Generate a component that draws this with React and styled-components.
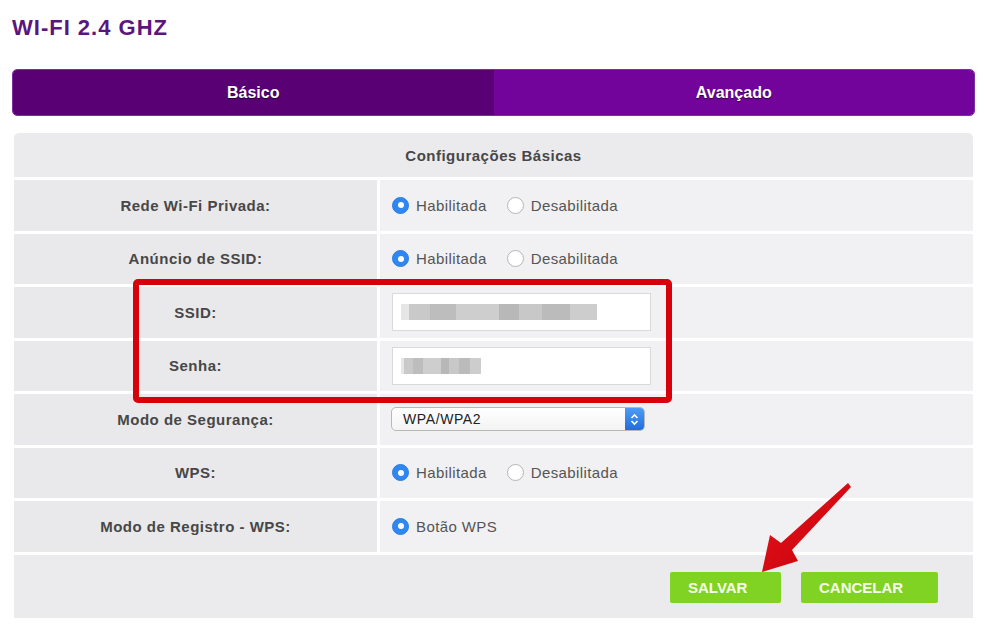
import React from 'react';
import styled, { createGlobalStyle } from 'styled-components';

const GlobalStyle = createGlobalStyle`
  html, body {
    margin: 0;
    padding: 0;
    background: #fff;
    font-family: "Liberation Sans", Arial, sans-serif;
  }
`;

const Page = styled.div`
  position: relative;
  width: 984px;
  height: 631px;
  overflow: hidden;
  padding: 14px 9px 0 12px;
  box-sizing: border-box;
`;

const Title = styled.h1`
  margin: 0 0 27px 0;
  font-size: 22px;
  line-height: 28px;
  letter-spacing: 1px;
  font-weight: bold;
  color: #5b157f;
`;

const Tabs = styled.div`
  display: flex;
  height: 47px;
  border-radius: 5px;
  overflow: hidden;
  border: 1px solid #7d2fa0;
  box-sizing: border-box;
  margin-bottom: 17px;
`;

const Tab = styled.div`
  flex: 1;
  display: flex;
  align-items: center;
  justify-content: center;
  background: ${p => (p.$active ? '#5a0075' : '#72039b')};
  color: #fff;
  font-weight: bold;
  font-size: 16px;
  text-shadow: 0 1px 1px rgba(0, 0, 0, 0.6);
`;

const Panel = styled.div`
  margin: 0 2px;
  display: grid;
  grid-template-columns: 363px 1fr;
  grid-template-rows: 44px repeat(7, 50.5px) 63px;
  gap: 3px;
`;

const Header = styled.div`
  grid-column: 1 / -1;
  background: #ebebed;
  border-radius: 5px 5px 0 0;
  display: flex;
  align-items: center;
  justify-content: center;
  font-weight: bold;
  font-size: 15px;
  letter-spacing: 0.5px;
  color: #474747;
`;

const Label = styled.div`
  background: #e9e9eb;
  display: flex;
  align-items: center;
  justify-content: center;
  font-weight: bold;
  font-size: 15px;
  letter-spacing: 0.5px;
  color: #474747;
`;

const Value = styled.div`
  background: #f1f1f3;
  display: flex;
  align-items: center;
  padding-left: 12px;
  font-size: 15px;
  letter-spacing: 0.4px;
  color: #555;
`;

const RadioItem = styled.label`
  display: flex;
  align-items: center;
  margin-right: 20px;
`;

const RadioDot = styled.span`
  width: 17px;
  height: 17px;
  border-radius: 50%;
  box-sizing: border-box;
  margin-right: 7px;
  display: flex;
  align-items: center;
  justify-content: center;
  background: ${p => (p.$on ? '#2f87f2' : '#fff')};
  border: 1px solid ${p => (p.$on ? '#2a7de0' : '#b5b5b5')};
  &::after {
    content: '';
    display: ${p => (p.$on ? 'block' : 'none')};
    width: 6px;
    height: 6px;
    border-radius: 50%;
    background: #fff;
  }
`;

const TextInput = styled.div`
  width: 259px;
  height: 38px;
  box-sizing: border-box;
  background: #fff;
  border: 1px solid #d9d9d9;
  display: flex;
  align-items: center;
  padding-left: 8px;
`;

const Blur = styled.span`
  display: block;
  height: 16px;
  width: ${p => p.$w}px;
  background: linear-gradient(90deg, #e6e6e6 0 4%, #c9c9c9 4% 15%, #bdbdbd 15% 28%, #cecece 28% 50%, #b8b8b8 50% 60%, #c8c8c8 60% 72%, #bbbbbb 72% 86%, #cdcdcd 86%);
  filter: blur(0.6px);
`;

const Select = styled.div`
  width: 254px;
  height: 24px;
  box-sizing: border-box;
  border: 1px solid #b8b8b8;
  border-radius: 5px;
  background: linear-gradient(#fff, #f4f4f4);
  display: flex;
  align-items: center;
  justify-content: space-between;
  font-size: 14px;
  letter-spacing: 0.6px;
  color: #222;
  padding-left: 11px;
  overflow: hidden;
  margin-left: -1px;
`;

const Stepper = styled.span`
  width: 19px;
  height: 100%;
  background: linear-gradient(#4e9cf5, #1d6fe0);
  display: flex;
  align-items: center;
  justify-content: center;
`;

const Footer = styled.div`
  grid-column: 1 / -1;
  background: #ebebed;
  display: flex;
  align-items: center;
  justify-content: flex-end;
  gap: 20px;
  padding: 0 35px 0 0;
`;

const Button = styled.button`
  width: ${p => p.$w}px;
  height: 31px;
  border: none;
  border-radius: 2px;
  background: #80d323;
  color: #f6ffec;
  font-family: "Liberation Sans", Arial, sans-serif;
  font-size: 15px;
  font-weight: bold;
  text-align: left;
  padding-left: 18px;
  margin-top: 2px;
`;

const Highlight = styled.div`
  position: absolute;
  left: 133px;
  top: 279px;
  width: 539px;
  height: 124px;
  box-sizing: border-box;
  border: 6px solid #d8000b;
  border-radius: 5px;
  pointer-events: none;
`;

const Arrow = styled.svg`
  position: absolute;
  left: 0;
  top: 0;
  pointer-events: none;
`;

const Radio = ({ on, children }) => (
  <RadioItem>
    <RadioDot $on={on} />
    {children}
  </RadioItem>
);

const Toggle = () => (
  <>
    <Radio on>Habilitada</Radio>
    <Radio>Desabilitada</Radio>
  </>
);

export default function App() {
  return (
    <>
      <GlobalStyle />
      <Page>
        <Title>WI-FI 2.4 GHZ</Title>
        <Tabs>
          <Tab $active>Básico</Tab>
          <Tab>Avançado</Tab>
        </Tabs>
        <Panel>
          <Header>Configurações Básicas</Header>
          <Label>Rede Wi-Fi Privada:</Label>
          <Value><Toggle /></Value>
          <Label>Anúncio de SSID:</Label>
          <Value><Toggle /></Value>
          <Label>SSID:</Label>
          <Value><TextInput><Blur $w={196} /></TextInput></Value>
          <Label>Senha:</Label>
          <Value><TextInput><Blur $w={80} /></TextInput></Value>
          <Label>Modo de Segurança:</Label>
          <Value>
            <Select>
              WPA/WPA2
              <Stepper>
                <svg width="9" height="13" viewBox="0 0 9 13">
                  <path d="M1.5 5 L4.5 2 L7.5 5 M1.5 8 L4.5 11 L7.5 8" fill="none" stroke="#fff" strokeWidth="1.6" />
                </svg>
              </Stepper>
            </Select>
          </Value>
          <Label>WPS:</Label>
          <Value><Toggle /></Value>
          <Label>Modo de Registro - WPS:</Label>
          <Value><Radio on>Botão WPS</Radio></Value>
          <Footer>
            <Button $w={111}>SALVAR</Button>
            <Button $w={137}>CANCELAR</Button>
          </Footer>
        </Panel>
        <Highlight />
        <Arrow width="984" height="631" viewBox="0 0 984 631">
          <defs>
            <linearGradient id="ag" x1="0" y1="0" x2="1" y2="1">
              <stop offset="0" stopColor="#e8141c" />
              <stop offset="1" stopColor="#c4000a" />
            </linearGradient>
          </defs>
          <polygon
            points="848,483 851,487 792,550 798,561 762,572 770,535 781,543"
            fill="url(#ag)"
          />
        </Arrow>
      </Page>
    </>
  );
}
